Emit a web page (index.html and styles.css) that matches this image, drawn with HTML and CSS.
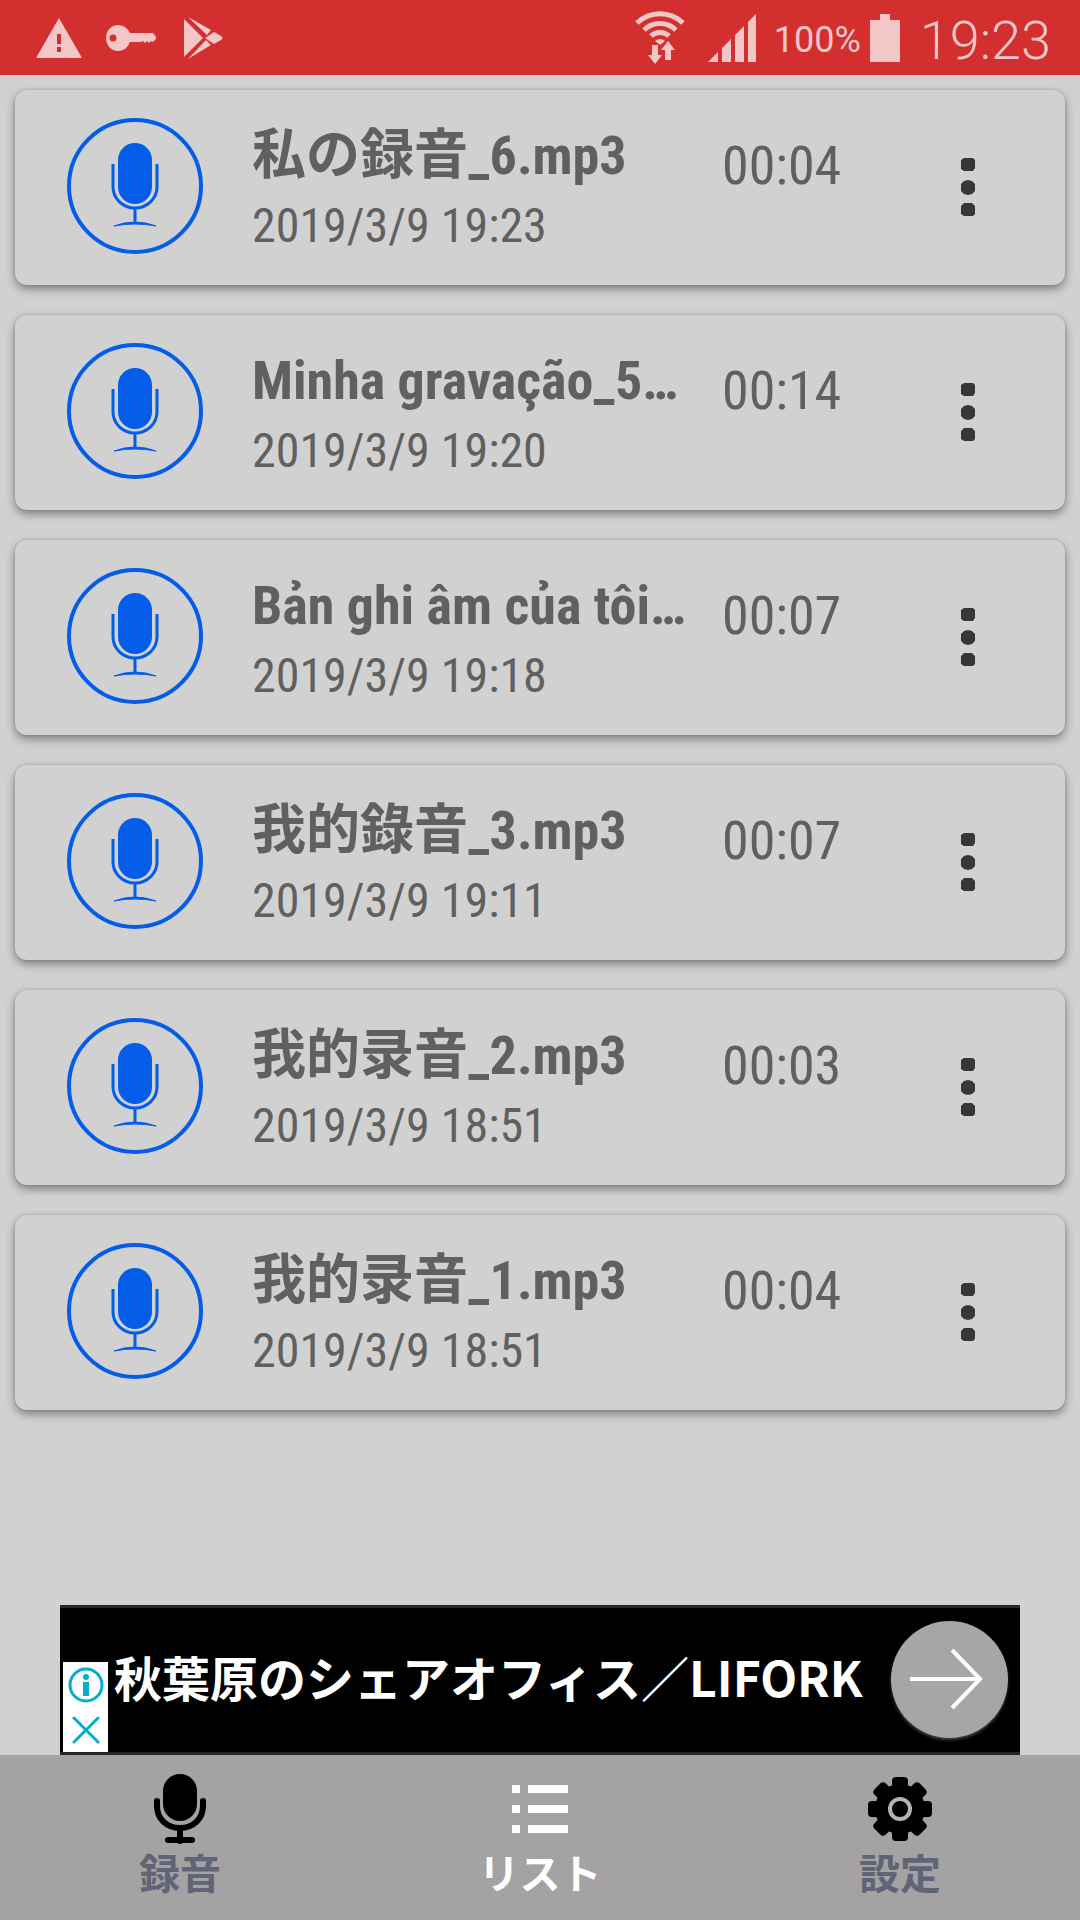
FILE: index.html
```html
<!DOCTYPE html>
<html lang="ja">
<head>
<meta charset="utf-8">
<meta name="viewport" content="width=device-width, initial-scale=1">
<title>録音リスト</title>
<link rel="stylesheet" href="styles.css">
</head>
<body>
<svg class="defs" aria-hidden="true">
  <symbol id="mic" viewBox="0 0 136 136">
    <circle cx="68" cy="68" r="66" fill="none" stroke="#045de9" stroke-width="4"/>
    <rect x="51" y="25" width="34" height="61" rx="17" fill="#045de9"/>
    <path d="M46 46v23a22 21 0 0 0 44 0V46M68 90v14" fill="none" stroke="#045de9" stroke-width="3"/>
    <path d="M47 108q21-8 42 0q-21-4-42 0z" fill="#045de9" stroke="#045de9"/>
  </symbol>
  <symbol id="dots" viewBox="0 0 14 60">
    <path d="M3 1h9l2 2v8l-2 3H3l-3-2V3zM3 24l4-1 4 1 3 3v7l-3 3-4 1-4-1-3-3v-7zM3 46h8l3 3v8l-2 2H3l-3-2v-8z" fill="#373737"/>
  </symbol>
</svg>

<header class="status">
  <div class="status-group notices">
    <svg width="46" height="40" viewBox="0 0 46 40"><path fill-rule="evenodd" d="M23 0l23 40H0zM21 16v10h4V16zM21 29v5h4v-5z"/></svg>
    <svg width="50" height="28" viewBox="0 0 50 28"><path fill-rule="evenodd" d="M12 1c6 0 10 4 12 8h23l3 4v2l-3 3-2-1-2 2-2-2-2 2-2-2-2 1H24c-2 5-6 9-12 9C5 27 0 21 0 14S5 1 12 1zM7 10.500a3.500 3.500 0 1 0 0 7a3.500 3.500 0 0 0 0-7z"/></svg>
    <svg class="play" width="40" height="42" viewBox="0 0 40 42"><path d="M0 2l19 19L0 40zM4 0l23 13-4 5zM30 15l7 4q3 2 0 4l-7 4-9-6zM4 42l18-19 5 5z"/></svg>
  </div>
  <div class="status-group signals">
    <svg class="wifi" width="50" height="54" viewBox="0 0 50 54">
      <path fill="none" stroke="currentColor" stroke-width="5" d="M2 12a33 33 0 0 1 46 0M9 19a23 23 0 0 1 32 0M16 25a13 13 0 0 1 18 0"/>
      <path d="M20 30q5-4 10 0l-5 4zM17 34h6v10h4l-7 9-7-9h4zM33 30l7 9h-4v10h-6V39h-4z"/>
    </svg>
    <svg width="48" height="48" viewBox="0 0 48 48"><path d="M0 48L10 38V48zM14 48V34L23 25V48zM27 48V21L36 12V48zM40 48V8L48 0V48z"/></svg>
    <span class="battery-level">100%</span>
    <svg width="30" height="48" viewBox="0 0 30 48"><path d="M10 0h10v6h10v42H0V6h10z"/></svg>
    <time class="clock">19:23</time>
  </div>
</header>

<main>
  <ul class="recordings">
    <li class="card">
      <svg class="mic"><use href="#mic"/></svg>
      <div class="info"><h2 class="name">私の録音_6.mp3</h2><p class="date">2019/3/9 19:23</p></div>
      <span class="length">00:04</span>
      <button class="more" aria-label="メニュー"><svg width="14" height="60"><use href="#dots"/></svg></button>
    </li>
    <li class="card">
      <svg class="mic"><use href="#mic"/></svg>
      <div class="info"><h2 class="name" lang="pt">Minha gravação_5…</h2><p class="date">2019/3/9 19:20</p></div>
      <span class="length">00:14</span>
      <button class="more" aria-label="メニュー"><svg width="14" height="60"><use href="#dots"/></svg></button>
    </li>
    <li class="card">
      <svg class="mic"><use href="#mic"/></svg>
      <div class="info"><h2 class="name" lang="vi">Bản ghi âm của tôi…</h2><p class="date">2019/3/9 19:18</p></div>
      <span class="length">00:07</span>
      <button class="more" aria-label="メニュー"><svg width="14" height="60"><use href="#dots"/></svg></button>
    </li>
    <li class="card">
      <svg class="mic"><use href="#mic"/></svg>
      <div class="info"><h2 class="name">我的錄音_3.mp3</h2><p class="date">2019/3/9 19:11</p></div>
      <span class="length">00:07</span>
      <button class="more" aria-label="メニュー"><svg width="14" height="60"><use href="#dots"/></svg></button>
    </li>
    <li class="card">
      <svg class="mic"><use href="#mic"/></svg>
      <div class="info"><h2 class="name">我的录音_2.mp3</h2><p class="date">2019/3/9 18:51</p></div>
      <span class="length">00:03</span>
      <button class="more" aria-label="メニュー"><svg width="14" height="60"><use href="#dots"/></svg></button>
    </li>
    <li class="card">
      <svg class="mic"><use href="#mic"/></svg>
      <div class="info"><h2 class="name">我的录音_1.mp3</h2><p class="date">2019/3/9 18:51</p></div>
      <span class="length">00:04</span>
      <button class="more" aria-label="メニュー"><svg width="14" height="60"><use href="#dots"/></svg></button>
    </li>
  </ul>
</main>

<aside class="ad">
  <div class="ad-choices">
    <button aria-label="広告について"><svg width="36" height="36" viewBox="0 0 36 36"><circle cx="18" cy="18" r="16" fill="none" stroke="#00aecd" stroke-width="3"/><circle cx="18" cy="10" r="3" fill="#00aecd"/><path d="M15 15h6v14h-6z" fill="#00aecd"/></svg></button>
    <button aria-label="広告を閉じる"><svg width="28" height="28" viewBox="0 0 28 28"><path d="M2 2l24 24M26 2L2 26" stroke="#00aecd" stroke-width="3" stroke-linecap="round"/></svg></button>
  </div>
  <a class="ad-link" href="#ad">
    <span class="ad-text">秋葉原のシェアオフィス／LIFORK</span>
    <span class="ad-go"><svg width="82" height="62" viewBox="0 0 82 62"><path d="M1 31h69M43 2l28 29-28 29" fill="none" stroke="#fff" stroke-width="4"/></svg></span>
  </a>
</aside>

<nav class="tabs">
  <a class="tab" href="#record">
    <svg width="52" height="70" viewBox="0 0 52 70"><rect x="9" y="0" width="34" height="47" rx="17"/><path d="M3 27v5c0 13 10 22 23 22s23-9 23-22v-5M26 54v13M14 66h24" fill="none" stroke="currentColor" stroke-width="6" stroke-linecap="round"/></svg>
    <span>録音</span>
  </a>
  <a class="tab active" href="#list" aria-current="page">
    <svg width="56" height="70" viewBox="0 0 56 70"><path d="M0 11h8v8H0zM16 11h40v8H16zM0 31h8v8H0zM16 31h40v8H16zM0 51h8v8H0zM16 51h40v8H16z"/></svg>
    <span>リスト</span>
  </a>
  <a class="tab" href="#settings">
    <svg width="66" height="70" viewBox="-33 -35 66 70">
      <circle r="25"/>
      <g id="teeth"><rect x="-8" y="-32" width="16" height="64" rx="4"/><rect x="-32" y="-8" width="64" height="16" rx="4"/></g>
      <use href="#teeth" transform="rotate(45)"/>
      <circle r="10" fill="none" stroke="#b4b2b3" stroke-width="4"/>
    </svg>
    <span>設定</span>
  </a>
</nav>
</body>
</html>
```

FILE: styles.css
```css
* {
  box-sizing: border-box;
  margin: 0;
  padding: 0;
}

body {
  min-height: 100vh;
  display: flex;
  flex-direction: column;
  background: #d1d1d1;
  color: #606060;
  font-family: "Roboto Condensed", Roboto, "Noto Sans CJK JP", sans-serif;
}

button {
  border: 0;
  background: none;
  display: flex;
  align-items: center;
  justify-content: center;
}

.defs {
  display: none;
}

/* Status bar */
.status {
  height: 75px;
  padding: 0 29px 0 36px;
  display: flex;
  justify-content: space-between;
  align-items: center;
  background: #d32f2f;
  color: #f3c7c8;
  font-family: Roboto, sans-serif;
}

.status svg {
  fill: currentColor;
}

.status-group {
  display: flex;
  align-items: center;
}

.notices {
  gap: 24px;
}

.play {
  margin-left: 4px;
}

.wifi {
  margin-right: 23px;
}

.battery-level {
  margin: 4px 9px 0 18px;
  font-size: 36px;
}

.clock {
  margin: 5px 0 0 20px;
  font-size: 54px;
  font-weight: 350;
}

/* Recording cards */
main {
  flex: 1;
}

.recordings {
  padding: 15px;
  display: flex;
  flex-direction: column;
  gap: 30px;
  list-style: none;
}

.card {
  height: 195px;
  padding: 28px 43px 28px 52px;
  display: flex;
  align-items: flex-start;
  border-radius: 12px;
  background: #d1d1d1;
  box-shadow: 0 4px 10px rgba(0, 0, 0, 0.4), 0 0 3px rgba(0, 0, 0, 0.15);
}

.mic {
  width: 136px;
  height: 136px;
  flex: none;
}

.info {
  flex: 1;
  min-width: 0;
  margin-left: 49px;
}

.name {
  height: 76px;
  line-height: 76px;
  font-size: 54px;
  font-weight: 700;
  white-space: nowrap;
}

.date {
  line-height: 64px;
  font-size: 48px;
}

.length {
  width: 192px;
  line-height: 96px;
  font-size: 54px;
}

.more {
  width: 108px;
  height: 138px;
}

/* Advertisement */
.ad {
  height: 150px;
  margin: 0 60px;
  padding-left: 3px;
  display: flex;
  align-items: flex-end;
  background: #000;
  border: solid #262626;
  border-width: 3px 0;
}

.ad-choices {
  width: 45px;
  height: 90px;
  display: grid;
  grid-template-rows: 1fr 1fr;
  background: #fff;
}

.ad-link {
  flex: 1;
  height: 144px;
  padding: 0 12px 2px 6px;
  display: flex;
  align-items: center;
  justify-content: space-between;
  color: #fff;
  font-family: "Noto Sans CJK JP", sans-serif;
  font-size: 48px;
  font-weight: 700;
  text-decoration: none;
  white-space: nowrap;
}

.ad-text {
  padding-bottom: 6px;
}

.ad-go {
  width: 117px;
  height: 117px;
  display: flex;
  align-items: center;
  justify-content: center;
  border-radius: 50%;
  background: #a6a6a6;
  box-shadow: 0 2px 3px #444;
}

/* Bottom tabs */
.tabs {
  height: 165px;
  padding-top: 19px;
  display: grid;
  grid-template-columns: repeat(3, 1fr);
  background: #a4a2a3;
}

.tab {
  display: flex;
  flex-direction: column;
  align-items: center;
  color: #616477;
  font-family: "Noto Sans CJK JP", sans-serif;
  font-size: 41px;
  font-weight: 700;
  line-height: 54px;
  text-decoration: none;
}

.tab svg {
  color: #000;
  fill: currentColor;
}

.tab.active,
.tab.active svg {
  color: #fff;
}
```
